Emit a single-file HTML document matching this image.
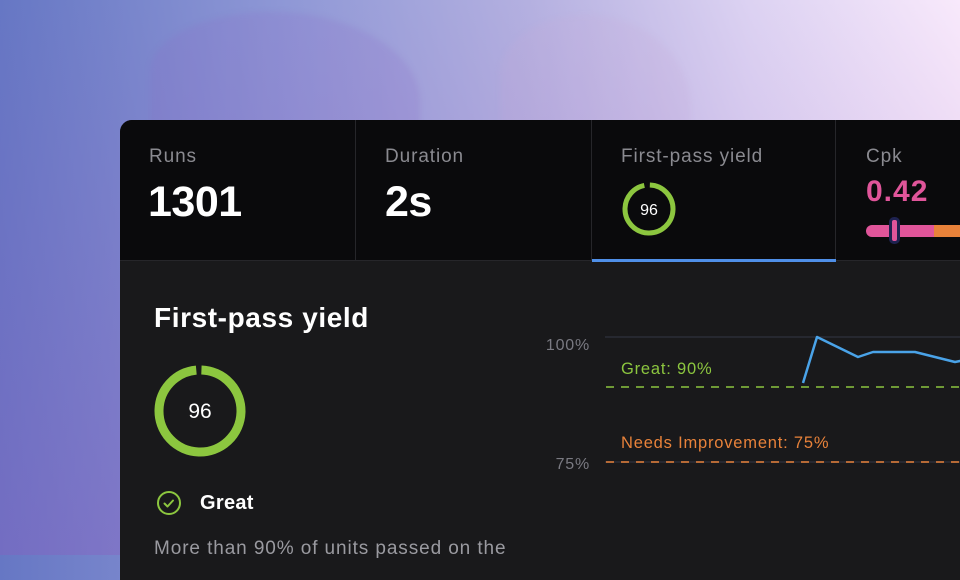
<!DOCTYPE html>
<html><head><style>
*{margin:0;padding:0;box-sizing:border-box}
body{width:960px;height:555px;overflow:hidden;position:relative;font-family:"Liberation Sans",sans-serif;
background:linear-gradient(90deg,#6677c4 0%,#8f98d6 30%,#b4b0e0 55%,#dcd2f2 78%,#f8e9fb 100%);}
.ov{position:absolute;left:0;top:0;width:960px;height:555px;background:linear-gradient(180deg,rgba(0,0,0,0) 0%,rgba(140,90,190,.35) 100%);}
.blob{position:absolute;border-radius:45% 55% 0 0/30% 45% 0 0;filter:blur(3px)}
.card{position:absolute;left:120px;top:120px;width:860px;height:460px;background:#19191b;border-top-left-radius:12px;overflow:hidden}
.top{position:absolute;left:0;top:0;width:100%;height:141px;background:#0a0a0c;border-bottom:1px solid #26262a}
.cell{position:absolute;top:0;height:141px;border-right:1px solid #26262a}
.lab{position:absolute;top:26px;font-size:19px;color:#8a8a90;letter-spacing:0.9px}
.big{position:absolute;top:58px;font-size:43px;font-weight:bold;color:#fff;letter-spacing:-0.5px}
</style></head><body>
<div class="blob" style="left:150px;top:12px;width:270px;height:200px;background:rgba(140,110,200,.2)"></div>
<div class="blob" style="left:500px;top:15px;width:190px;height:200px;background:rgba(200,170,215,.18)"></div>
<div class="ov"></div>
<div class="card">
 <div class="top">
  <div class="cell" style="left:0;width:236px"><div class="lab" style="left:29px">Runs</div><div class="big" style="left:28px">1301</div></div>
  <div class="cell" style="left:236px;width:236px"><div class="lab" style="left:29px">Duration</div><div class="big" style="left:29px">2s</div></div>
  <div class="cell" style="left:472px;width:244px"><div class="lab" style="left:29px">First-pass yield</div>
   <svg style="position:absolute;left:29px;top:61px" width="56" height="56"><circle cx="28" cy="28" r="24" fill="none" stroke="#8cc63f" stroke-width="5" stroke-dasharray="145 6" transform="rotate(-88 28 28)"/><text x="28" y="34" text-anchor="middle" fill="#fff" font-size="16" font-family="Liberation Sans">96</text></svg>
   <div style="position:absolute;left:0;bottom:-1px;width:244px;height:3px;background:#4f8fe8"></div></div>
  <div class="cell" style="left:716px;width:200px;border:none"><div class="lab" style="left:30px">Cpk</div>
   <div style="position:absolute;left:30px;top:55px;font-size:30px;font-weight:bold;color:#e0559a;letter-spacing:1px">0.42</div>
   <div style="position:absolute;left:30px;top:105px;width:70px;height:12px;background:#e0559a;border-radius:6px 0 0 6px"></div>
   <div style="position:absolute;left:98px;top:105px;width:26px;height:12px;background:#e8823a"></div>
   <div style="position:absolute;left:124px;top:105px;width:10px;height:12px;background:#8cc63f"></div>
   <div style="position:absolute;left:53px;top:97px;width:11px;height:27px;background:#e0559a;border:3px solid #1e2250;border-radius:5px"></div>
  </div>
 </div>
 <div style="position:absolute;left:34px;top:182px;font-size:28px;font-weight:bold;color:#fff;letter-spacing:0.6px">First-pass yield</div>
 <svg style="position:absolute;left:33px;top:244px" width="94" height="94"><circle cx="47" cy="47" r="41" fill="none" stroke="#8cc63f" stroke-width="9" stroke-dasharray="252 6" transform="rotate(-88 47 47)"/><text x="47" y="54" text-anchor="middle" fill="#fff" font-size="21" font-family="Liberation Sans">96</text></svg>
 <svg style="position:absolute;left:36px;top:370px" width="26" height="26"><circle cx="13" cy="13" r="11" fill="none" stroke="#8cc63f" stroke-width="2"/><path d="M8.5 13.5l3 3 5.5-6" fill="none" stroke="#8cc63f" stroke-width="2" stroke-linecap="round" stroke-linejoin="round"/></svg>
 <div style="position:absolute;left:80px;top:372px;font-size:20px;font-weight:bold;color:#fff;letter-spacing:0.3px">Great</div>
 <div style="position:absolute;left:34px;top:418px;font-size:19px;color:#9a9aa0;white-space:nowrap;letter-spacing:0.9px">More than 90% of units passed on the</div>
 <svg style="position:absolute;left:400px;top:200px" width="460" height="160">
  <line x1="85" y1="17" x2="460" y2="17" stroke="#2a2d38" stroke-width="1.5"/>
  <line x1="85" y1="142" x2="460" y2="142" stroke="#2a2d38" stroke-width="1.5"/>
  <line x1="86" y1="67" x2="460" y2="67" stroke="#8cc63f" stroke-width="1.5" stroke-dasharray="8 7"/>
  <line x1="86" y1="142" x2="460" y2="142" stroke="#e8823a" stroke-width="1.5" stroke-dasharray="8 7"/>
  <polyline points="283,63 297,17 338,37 353,32 395,32 435,42 445,40" fill="none" stroke="#4aa3e8" stroke-width="2.5" stroke-linejoin="round"/>
  <text x="70" y="30" text-anchor="end" fill="#7a7a82" font-size="16" font-family="Liberation Sans" letter-spacing="0.8">100%</text>
  <text x="70" y="149" text-anchor="end" fill="#7a7a82" font-size="16" font-family="Liberation Sans" letter-spacing="0.8">75%</text>
  <text x="101" y="54" fill="#8cc63f" font-size="16.5" font-family="Liberation Sans" letter-spacing="0.8">Great: 90%</text>
  <text x="101" y="128" fill="#e8823a" font-size="16.5" font-family="Liberation Sans" letter-spacing="0.8">Needs Improvement: 75%</text>
 </svg>
</div>
</body></html>
